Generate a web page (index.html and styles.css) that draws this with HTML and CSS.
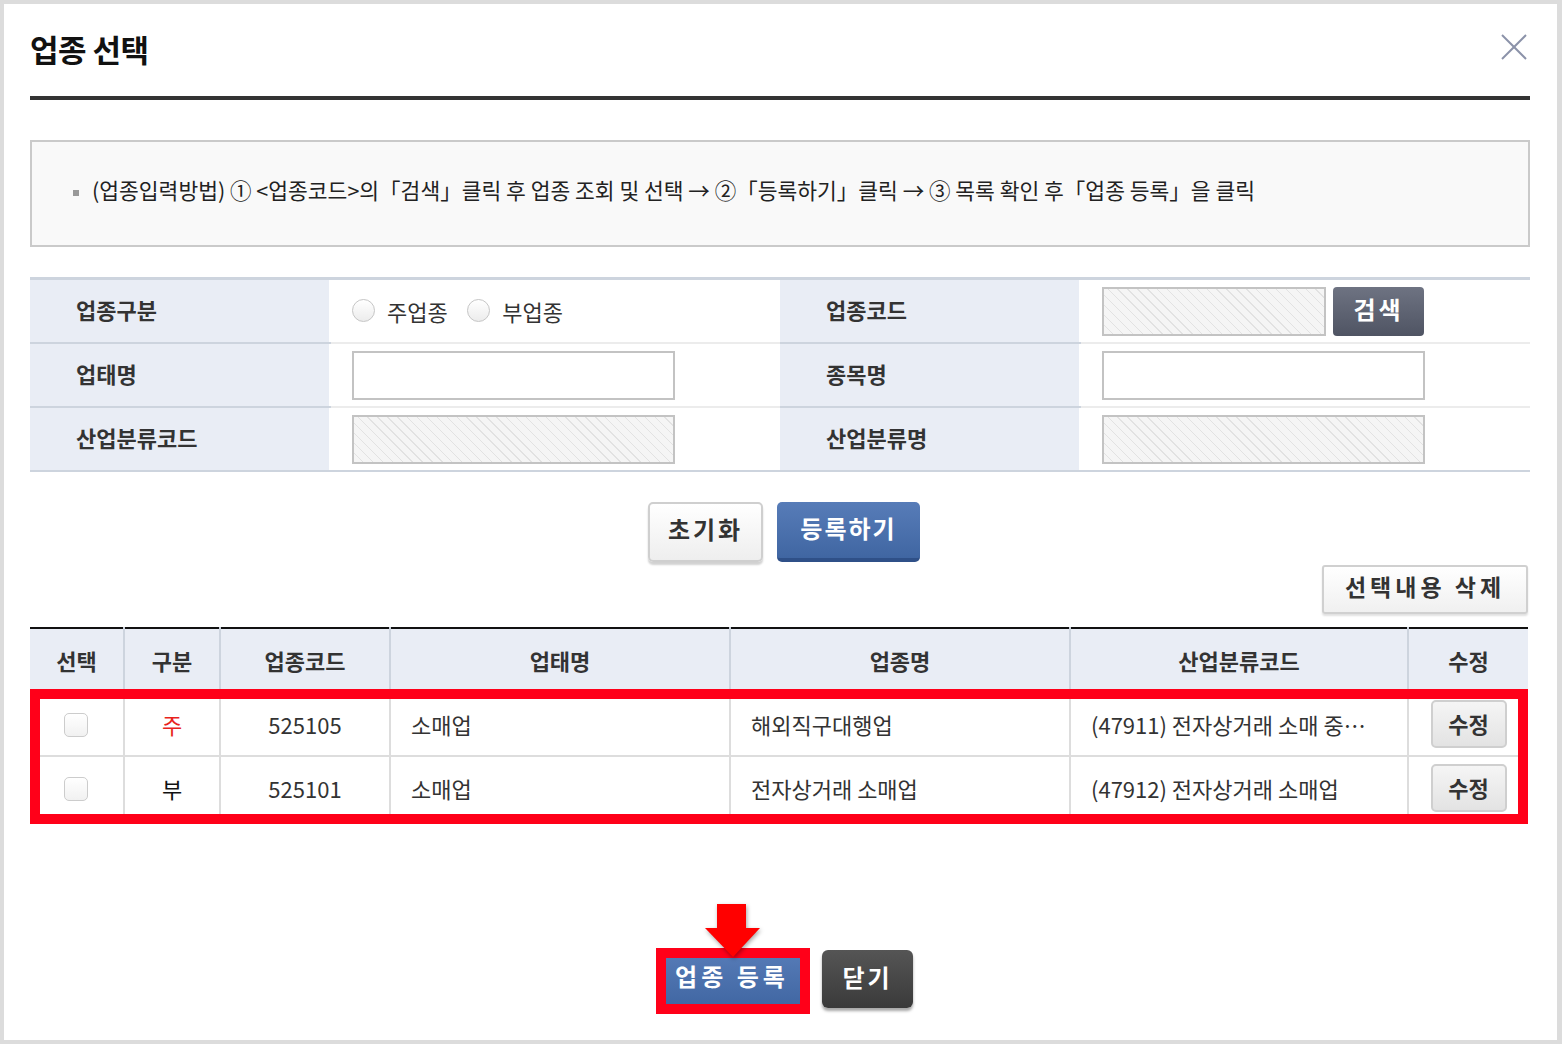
FILE: index.html
```html
<!DOCTYPE html>
<html>
<head>
    <meta charset="utf-8">
    <title>업종 선택</title>
    <link rel="stylesheet" href="styles.css">
</head>
<body>
    <div class="popup">
        <div class="popup-header">
            <h1 class="popup-title">업종 선택</h1>
            <button class="close-btn" title="닫기">
                <svg width="26" height="26" viewBox="0 0 26 26">
                    <line x1="1" y1="1" x2="25" y2="25" stroke="#8b92a9" stroke-width="2"/>
                    <line x1="25" y1="1" x2="1" y2="25" stroke="#8b92a9" stroke-width="2"/>
                </svg>
            </button>
        </div>

        <div class="guide-box">
            <span class="bullet"></span>(업종입력방법) ① &lt;업종코드&gt;의「검색」클릭 후 업종 조회 및 선택 → ②「등록하기」클릭 → ③ 목록 확인 후「업종 등록」을 클릭
        </div>

        <table class="form-table">
            <colgroup>
                <col style="width:300px">
                <col style="width:450px">
                <col style="width:300px">
                <col style="width:450px">
            </colgroup>
            <tr>
                <th>업종구분</th>
                <td>
                    <label class="radio"><input type="radio" name="kind"> 주업종</label>
                    <label class="radio"><input type="radio" name="kind"> 부업종</label>
                </td>
                <th>업종코드</th>
                <td>
                    <div class="code-wrap">
                        <input class="field code readonly" type="text" readonly>
                        <button class="search-btn">검색</button>
                    </div>
                </td>
            </tr>
            <tr>
                <th>업태명</th>
                <td><input class="field" type="text"></td>
                <th>종목명</th>
                <td><input class="field" type="text"></td>
            </tr>
            <tr>
                <th>산업분류코드</th>
                <td><input class="field readonly" type="text" readonly></td>
                <th>산업분류명</th>
                <td><input class="field readonly" type="text" readonly></td>
            </tr>
        </table>

        <div class="action-row">
            <button class="btn-reset">초기화</button>
            <button class="btn-blue">등록하기</button>
        </div>

        <div class="delete-row">
            <button class="btn-delete">선택내용 삭제</button>
        </div>

        <div class="list-wrap">
            <table class="list-table">
                <colgroup>
                    <col style="width:94px">
                    <col style="width:96px">
                    <col style="width:170px">
                    <col style="width:340px">
                    <col style="width:340px">
                    <col style="width:338px">
                    <col style="width:120px">
                </colgroup>
                <thead>
                    <tr>
                        <th>선택</th>
                        <th>구분</th>
                        <th>업종코드</th>
                        <th>업태명</th>
                        <th>업종명</th>
                        <th>산업분류코드</th>
                        <th>수정</th>
                    </tr>
                </thead>
                <tbody>
                    <tr>
                        <td><input class="check" type="checkbox"></td>
                        <td class="main">주</td>
                        <td>525105</td>
                        <td class="left">소매업</td>
                        <td class="left">해외직구대행업</td>
                        <td class="left">(47911) 전자상거래 소매 중…</td>
                        <td><button class="btn-edit">수정</button></td>
                    </tr>
                    <tr>
                        <td><input class="check" type="checkbox"></td>
                        <td class="sub">부</td>
                        <td>525101</td>
                        <td class="left">소매업</td>
                        <td class="left">전자상거래 소매업</td>
                        <td class="left">(47912) 전자상거래 소매업</td>
                        <td><button class="btn-edit">수정</button></td>
                    </tr>
                </tbody>
            </table>
            <div class="highlight"></div>
        </div>

        <div class="footer-btns">
            <span class="marked">
                <button class="btn-register">업종 등록</button>
                <span class="mark-box"></span>
                <svg class="mark-arrow" width="55" height="54" viewBox="0 0 55 54">
                    <rect x="12" y="0" width="29" height="25" fill="#ff0000"/>
                    <polygon points="0,24 55,24 28,53" fill="#ff0000"/>
                </svg>
            </span>
            <button class="btn-close">닫기</button>
        </div>
    </div>
</body>
</html>
```

FILE: styles.css
```css
/* General */
body {
    margin: 0;
    padding: 0;
    background: #dcdcdc;
    font-family: "Noto Sans CJK KR", "Noto Sans", sans-serif;
    color: #333;
}

button {
    font-family: "Noto Sans CJK KR", sans-serif;
    cursor: pointer;
}

.popup {
    position: relative;
    margin: 4px 5px 4px 4px;
    height: 1036px;
    box-sizing: border-box;
    padding: 0 27px 0 26px;
    background: #fff;
}

/* Header */
.popup-header {
    display: flex;
    justify-content: space-between;
    align-items: center;
    height: 92px;
    border-bottom: 4px solid #333;
}

.popup-title {
    margin: 0 0 4px;
    font-size: 31px;
    font-weight: bold;
    color: #111;
    letter-spacing: -0.5px;
}

.close-btn {
    background: none;
    border: none;
    padding: 0;
    margin: 0 3px 6px 0;
    width: 26px;
    height: 26px;
}

/* Guide */
.guide-box {
    margin-top: 40px;
    border: 2px solid #cacaca;
    background: #f9f9f9;
    padding: 32px 0 39px 41px;
    font-size: 21.5px;
    line-height: 32px;
    color: #222;
}

.bullet {
    display: inline-block;
    width: 6px;
    height: 6px;
    background: #999;
    margin-right: 13px;
    vertical-align: middle;
}

/* Form table */
.form-table {
    width: 100%;
    margin-top: 30px;
    border-collapse: collapse;
    table-layout: fixed;
    border-top: 3px solid #cdd4de;
}

.form-table th {
    height: 58px;
    padding: 0 0 4px 46px;
    background: #e9edf5;
    text-align: left;
    font-size: 22px;
    font-weight: bold;
    color: #333;
    border-bottom: 2px solid #cdd4de;
}

.form-table td {
    padding: 0 0 0 21px;
    border-bottom: 2px solid #ececec;
    border-left: 2px solid #fff;
}

.form-table tr:last-child td {
    border-bottom: 2px solid #cdd4de;
}

.radio {
    display: inline-flex;
    align-items: center;
    font-size: 22px;
    color: #333;
    margin-right: 16px;
}

.radio input {
    appearance: none;
    -webkit-appearance: none;
    width: 23px;
    height: 23px;
    margin: 0 12px 0 0;
    border: 1px solid #c6c6c6;
    border-radius: 50%;
    background: linear-gradient(#ffffff, #ececec);
}

.field {
    width: 323px;
    height: 49px;
    box-sizing: border-box;
    border: 2px solid #c3c3c3;
    background: #fff;
    vertical-align: middle;
}

.field.readonly {
    background: repeating-linear-gradient(45deg, #f5f5f5 0, #f5f5f5 6px, #e2e2e2 6px, #e2e2e2 7px);
}

.field.code {
    width: 224px;
}

.code-wrap {
    display: flex;
    gap: 7px;
    align-items: center;
}

.search-btn {
    width: 91px;
    height: 49px;
    border: none;
    border-radius: 4px;
    background: linear-gradient(#6e7382, #4f5463);
    color: #fff;
    font-size: 24px;
    font-weight: bold;
    letter-spacing: 3px;
    padding-bottom: 6px;
}

/* Actions */
.action-row {
    display: flex;
    justify-content: center;
    gap: 14px;
    margin-top: 30px;
    padding-left: 8px;
}

.btn-reset {
    width: 115px;
    height: 60px;
    border: 2px solid #cfcfcf;
    border-radius: 5px;
    background: linear-gradient(#ffffff, #eeeeee);
    box-shadow: 0 3px 2px rgba(0, 0, 0, 0.18);
    font-size: 24px;
    font-weight: bold;
    color: #333;
    letter-spacing: 3px;
    padding-bottom: 8px;
}

.btn-blue {
    width: 143px;
    height: 60px;
    border: none;
    border-bottom: 4px solid #2f5088;
    border-radius: 5px;
    background: linear-gradient(#577cb8, #4066a2);
    color: #fff;
    font-size: 24px;
    font-weight: bold;
    letter-spacing: 2px;
    padding-bottom: 6px;
}

.delete-row {
    display: flex;
    justify-content: flex-end;
    margin-top: 3px;
    padding-right: 2px;
}

.btn-delete {
    width: 206px;
    height: 49px;
    border: 2px solid #d0d0d0;
    border-radius: 3px;
    background: linear-gradient(#ffffff, #f0f0f0);
    box-shadow: 0 2px 2px rgba(0, 0, 0, 0.12);
    font-size: 23px;
    font-weight: bold;
    color: #333;
    letter-spacing: 4px;
    padding-bottom: 8px;
}

/* List table */
.list-wrap {
    position: relative;
    margin-top: 13px;
}

.list-table {
    width: 1498px;
    border-collapse: collapse;
    table-layout: fixed;
    border-top: 2px solid #111;
}

.list-table th {
    height: 62px;
    padding: 0 0 2px;
    background: #e9edf5;
    font-size: 22px;
    font-weight: bold;
    color: #333;
    border-right: 2px solid #cdd4de;
}

.list-table th:last-child {
    border-right: none;
}

.list-table td {
    height: 62px;
    padding: 0;
    text-align: center;
    font-size: 22px;
    color: #333;
    border-bottom: 2px solid #dddddd;
    border-right: 2px solid #dddddd;
    white-space: nowrap;
    overflow: hidden;
}

.list-table td:last-child {
    border-right: none;
}

.list-table td.left {
    text-align: left;
    padding-left: 20px;
}

.list-table td.main {
    color: #e8231c;
}

.list-table td.sub {
    color: #111;
}

.check {
    appearance: none;
    -webkit-appearance: none;
    width: 24px;
    height: 24px;
    margin: 0 2px 4px 0;
    border: 1px solid #cccccc;
    border-radius: 5px;
    background: linear-gradient(#ffffff, #f1f1f1);
    vertical-align: middle;
}

.btn-edit {
    width: 76px;
    height: 48px;
    border: 2px solid #cfcfcf;
    border-radius: 5px;
    background: linear-gradient(#f5f5f5, #e3e3e3);
    font-size: 22px;
    font-weight: bold;
    color: #333;
    padding-bottom: 4px;
    vertical-align: middle;
}

.highlight {
    position: absolute;
    left: 0;
    top: 62px;
    width: 1498px;
    height: 135px;
    box-sizing: border-box;
    border: 10px solid #ff0019;
}

/* Footer */
.footer-btns {
    display: flex;
    justify-content: center;
    align-items: flex-start;
    gap: 16px;
    margin-top: 129px;
    padding-left: 11px;
}

.marked {
    position: relative;
    display: inline-block;
}

.btn-register {
    display: block;
    width: 148px;
    height: 58px;
    border: none;
    border-radius: 5px;
    background: linear-gradient(#577cb8, #4066a2);
    color: #fff;
    font-size: 24px;
    font-weight: bold;
    letter-spacing: 4px;
    padding-bottom: 8px;
}

.mark-box {
    position: absolute;
    left: -2px;
    top: -2px;
    width: 154px;
    height: 66px;
    box-sizing: border-box;
    border: 10px solid #ff0019;
}

.mark-arrow {
    position: absolute;
    left: 47px;
    top: -46px;
    filter: drop-shadow(1px 2px 2px rgba(0, 0, 0, 0.35));
}

.btn-close {
    width: 91px;
    height: 58px;
    border: none;
    border-radius: 6px;
    background: linear-gradient(#555555, #3a3a3a);
    box-shadow: 0 3px 3px rgba(0, 0, 0, 0.35);
    color: #fff;
    font-size: 24px;
    font-weight: bold;
    letter-spacing: 3px;
    padding-bottom: 6px;
}
```
